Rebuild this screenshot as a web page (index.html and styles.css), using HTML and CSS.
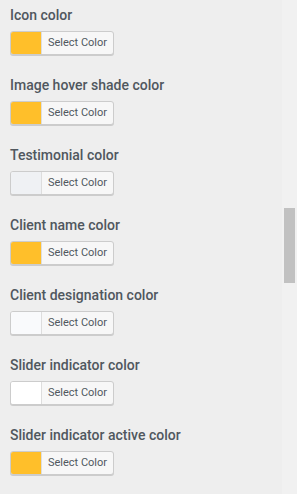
FILE: index.html
```html
<!DOCTYPE html>
<html>
<head>
<meta charset="utf-8">
<link rel="stylesheet" href="styles.css">
</head>
<body>
<div class="frame">
  <div class="panel">
    <div class="field">
      <div class="label">Icon color</div>
      <button class="picker"><span class="swatch yellow"></span><span class="txt">Select Color</span></button>
    </div>
    <div class="field">
      <div class="label">Image hover shade color</div>
      <button class="picker"><span class="swatch yellow"></span><span class="txt">Select Color</span></button>
    </div>
    <div class="field">
      <div class="label">Testimonial color</div>
      <button class="picker"><span class="swatch grey"></span><span class="txt">Select Color</span></button>
    </div>
    <div class="field">
      <div class="label">Client name color</div>
      <button class="picker"><span class="swatch yellow"></span><span class="txt">Select Color</span></button>
    </div>
    <div class="field">
      <div class="label">Client designation color</div>
      <button class="picker"><span class="swatch white"></span><span class="txt">Select Color</span></button>
    </div>
    <div class="field">
      <div class="label">Slider indicator color</div>
      <button class="picker"><span class="swatch white2"></span><span class="txt">Select Color</span></button>
    </div>
    <div class="field">
      <div class="label">Slider indicator active color</div>
      <button class="picker"><span class="swatch yellow"></span><span class="txt">Select Color</span></button>
    </div>
  </div>
  <div class="scrollbar"><div class="thumb"></div></div>
</div>
</body>
</html>
```
FILE: styles.css
```css
html, body {
  margin: 0;
  padding: 0;
  background: #eeeeee;
}
.frame {
  display: flex;
  width: 297px;
  height: 494px;
  overflow: hidden;
}
.panel {
  flex: 1;
  background: #eeeeee;
  padding-left: 10px;
  font-family: Roboto, "Liberation Sans", sans-serif;
}
.field {
  height: 70px;
  padding-top: 5px;
  box-sizing: border-box;
}
.label {
  font-size: 14px;
  line-height: 20px;
  font-weight: 500;
  color: #50575e;
  margin-bottom: 6px;
  white-space: nowrap;
}
.picker {
  display: flex;
  align-items: stretch;
  width: 104px;
  height: 24px;
  padding: 0;
  margin: 0;
  border: 1px solid #cccccc;
  border-radius: 3px;
  background: #f7f7f7;
  box-shadow: 0 1px 0 #cccccc;
  overflow: hidden;
  box-sizing: border-box;
  font-family: Roboto, "Liberation Sans", sans-serif;
}
.swatch {
  width: 30px;
  border-right: 1px solid #dddddd;
}
.swatch.yellow { background: #ffbf2a; }
.swatch.grey { background: #eff1f4; }
.swatch.white { background: #f9fafc; }
.swatch.white2 { background: #ffffff; }
.txt {
  flex: 1;
  font-size: 11px;
  line-height: 22px;
  color: #50575e;
  text-align: center;
}
.scrollbar {
  width: 15px;
  background: #f1f1f1;
  flex-shrink: 0;
}
.thumb {
  width: 11px;
  margin-left: 2px;
  margin-top: 208px;
  height: 75px;
  background: #c1c1c1;
}
```
